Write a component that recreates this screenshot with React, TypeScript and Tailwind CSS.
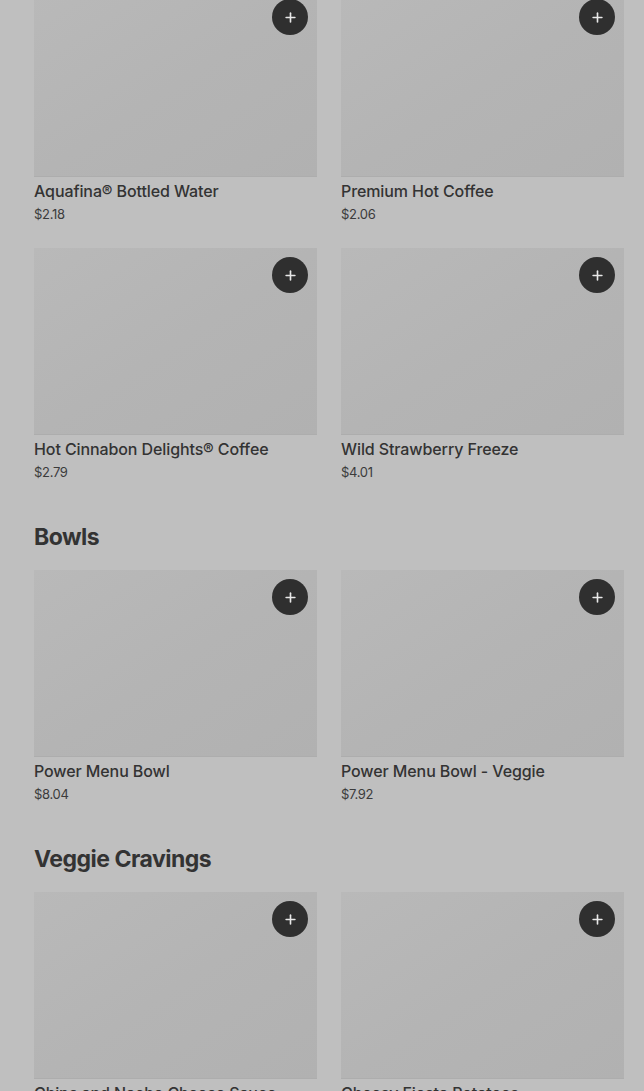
import { Plus } from 'lucide-react';

type Item = { name: string; price: string };

const rows: { title?: string; items: Item[] }[] = [
  {
    items: [
      { name: 'Aquafina® Bottled Water', price: '$2.18' },
      { name: 'Premium Hot Coffee', price: '$2.06' },
      { name: 'Hot Cinnabon Delights® Coffee', price: '$2.79' },
      { name: 'Wild Strawberry Freeze', price: '$4.01' },
    ],
  },
  {
    title: 'Bowls',
    items: [
      { name: 'Power Menu Bowl', price: '$8.04' },
      { name: 'Power Menu Bowl - Veggie', price: '$7.92' },
    ],
  },
  {
    title: 'Veggie Cravings',
    items: [
      { name: 'Chips and Nacho Cheese Sauce', price: '$2.49' },
      { name: 'Cheesy Fiesta Potatoes', price: '$2.99' },
    ],
  },
];

function ItemCard({ item }: { item: Item }) {
  return (
    <div className="flex flex-col">
      <div className="relative h-[187px] bg-gradient-to-br from-[#b9b9b9] via-[#b4b4b4] to-[#b1b1b1] border-b border-[#adadad]">
        <button className="absolute top-[9px] right-[9px] w-9 h-9 rounded-full bg-[#2f2f2f] flex items-center justify-center text-[#e8e8e8]">
          <Plus size={15} strokeWidth={2.6} />
        </button>
      </div>
      <p className="mt-1 text-[16px] leading-5 font-medium text-[#333333] tracking-[-0.1px]">{item.name}</p>
      <p className="mt-[5px] text-[13px] leading-4 text-[#3b3b3b] tracking-[-0.3px]">{item.price}</p>
    </div>
  );
}

export default function App() {
  return (
    <div
      className="min-h-screen bg-[#bfbfbf] pl-[34px] pr-[20px] overflow-hidden h-[1091px]"
      style={{ fontFamily: 'Inter, "Liberation Sans", sans-serif' }}
    >
      <div className="-mt-[10px] flex flex-col">
        {rows.map((section, i) => (
          <div key={i} className={section.title ? 'mt-[41px]' : ''}>
            {section.title && (
              <h2 className="text-[23px] leading-8 font-bold text-[#333333] tracking-[-0.5px] mb-[17px]">
                {section.title}
              </h2>
            )}
            <div className="grid grid-cols-2 gap-x-6 gap-y-[26px]">
              {section.items.map(item => (
                <ItemCard key={item.name} item={item} />
              ))}
            </div>
          </div>
        ))}
      </div>
    </div>
  );
}
